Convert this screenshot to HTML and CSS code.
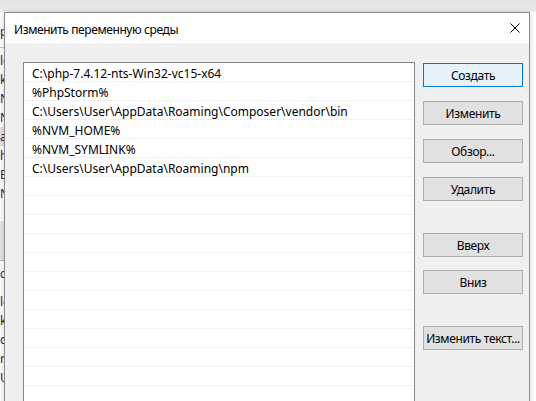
FILE: index.html
```html
<!DOCTYPE html>
<html lang="ru">
<head>
<meta charset="utf-8">
<title>Изменить переменную среды</title>
<link rel="stylesheet" href="styles.css">
</head>
<body>
<div class="desk">
  <div class="bgwin">
    <div class="bg-top"></div>
    <div class="bg-left">
      <div class="bg-head">р</div>
      <div class="bg-rows">
        <div class="bg-row">le</div>
        <div class="bg-row">k</div>
        <div class="bg-row">N</div>
        <div class="bg-row">N</div>
        <div class="bg-row sel">a</div>
        <div class="bg-row">h</div>
        <div class="bg-row">E</div>
        <div class="bg-row">N</div>
      </div>
      <div class="bg-sep"></div>
      <div class="bg-rows second">
        <div class="bg-row">ст</div>
        <div class="bg-row gap">le</div>
        <div class="bg-row">k</div>
        <div class="bg-row">c</div>
        <div class="bg-row">r</div>
        <div class="bg-row">U</div>
      </div>
    </div>
  </div>

  <div class="dialog">
    <div class="titlebar">
      <span class="title">Изменить переменную среды</span>
      <svg class="close" width="10" height="10" viewBox="0 0 10 10"><path d="M0.5 0.5 L9.5 9.5 M9.5 0.5 L0.5 9.5" stroke="#000" stroke-width="1" fill="none"/></svg>
    </div>
    <div class="body">
      <div class="list">
        <div class="row">C:\php-7.4.12-nts-Win32-vc15-x64</div>
        <div class="row">%PhpStorm%</div>
        <div class="row">C:\Users\User\AppData\Roaming\Composer\vendor\bin</div>
        <div class="row">%NVM_HOME%</div>
        <div class="row">%NVM_SYMLINK%</div>
        <div class="row">C:\Users\User\AppData\Roaming\npm</div>
        <div class="row"></div>
        <div class="row"></div>
        <div class="row"></div>
        <div class="row"></div>
        <div class="row"></div>
        <div class="row"></div>
        <div class="row"></div>
        <div class="row"></div>
        <div class="row"></div>
        <div class="row"></div>
        <div class="row"></div>
        <div class="row"></div>
        <div class="row"></div>
        <div class="row"></div>
      </div>
      <div class="buttons">
        <button class="btn default">Создать</button>
        <button class="btn g14">Изменить</button>
        <button class="btn g14">Обзор...</button>
        <button class="btn g14">Удалить</button>
        <button class="btn g32">Вверх</button>
        <button class="btn g13">Вниз</button>
        <button class="btn g32">Изменить текст...</button>
      </div>
    </div>
  </div>
</div>
</body>
</html>
```
FILE: styles.css
```css
* { box-sizing: border-box; }
html, body {
  margin: 0;
  padding: 0;
  width: 536px;
  height: 401px;
  overflow: hidden;
}
body {
  font-family: "Noto Sans", "Liberation Sans", sans-serif;
  font-size: 12px;
  color: #000;
  background: #fff;
}
.desk {
  position: relative;
  width: 536px;
  height: 401px;
  overflow: hidden;
}
.bgwin {
  width: 536px;
  height: 401px;
  background: #fff;
}
.bg-top {
  height: 12px;
  background: linear-gradient(#e4e4e4, #ededed);
}
.bg-left {
  width: 12px;
  color: #4a1230;
  font-size: 12px;
}
.bg-head {
  height: 36px;
  padding-top: 12px;
  line-height: 16px;
  border-bottom: 1px solid #c8c8c8;
}
.bg-rows {
  padding-top: 3px;
}
.bg-row {
  height: 19px;
  line-height: 19px;
  white-space: nowrap;
}
.bg-row.sel { background: #e2e2e2; }
.bg-sep {
  height: 40px;
  margin-top: 18px;
  background: #e6e6e6;
  border-bottom: 1px solid #b4b4b4;
}
.bg-rows.second .bg-row.gap { margin-top: 9px; }

.dialog {
  position: absolute;
  left: 4px;
  top: 12px;
  width: 526px;
  height: 400px;
  border: 1px solid #8a8a8a;
  border-bottom: none;
  background: #f0f0f0;
  box-shadow: 0 0 6px rgba(0,0,0,0.18);
}
.titlebar {
  height: 30px;
  background: #fff;
  display: flex;
  align-items: center;
  justify-content: space-between;
  padding: 0 9px 0 9px;
}
.title {
  font-size: 12px;
  letter-spacing: -0.4px;
  padding-top: 2px;
}
.close { display: block; }
.body {
  display: flex;
  align-items: flex-start;
  gap: 8px;
  padding: 19px 0 0 18px;
}
.list {
  width: 392px;
  height: 360px;
  background: #fff;
  border: 1px solid #828790;
  border-bottom: none;
  padding: 0 1px;
  overflow: hidden;
}
.row {
  height: 19px;
  line-height: 21px;
  border-bottom: 1px solid #f0f0f0;
  padding-left: 7px;
  white-space: nowrap;
}
.buttons {
  display: flex;
  flex-direction: column;
  padding-top: 1px;
}
.btn {
  width: 100px;
  height: 24px;
  padding: 1px 0 0;
  margin: 0;
  font: inherit;
  letter-spacing: -0.35px;
  white-space: nowrap;
  color: #000;
  background: #e1e1e1;
  border: 1px solid #adadad;
  border-radius: 0;
}
.btn.default {
  background: #e5f1fb;
  border-color: #0078d7;
}
.btn.g13 { margin-top: 13px; }
.btn.g14 { margin-top: 14px; }
.btn.g32 { margin-top: 32px; }
```
